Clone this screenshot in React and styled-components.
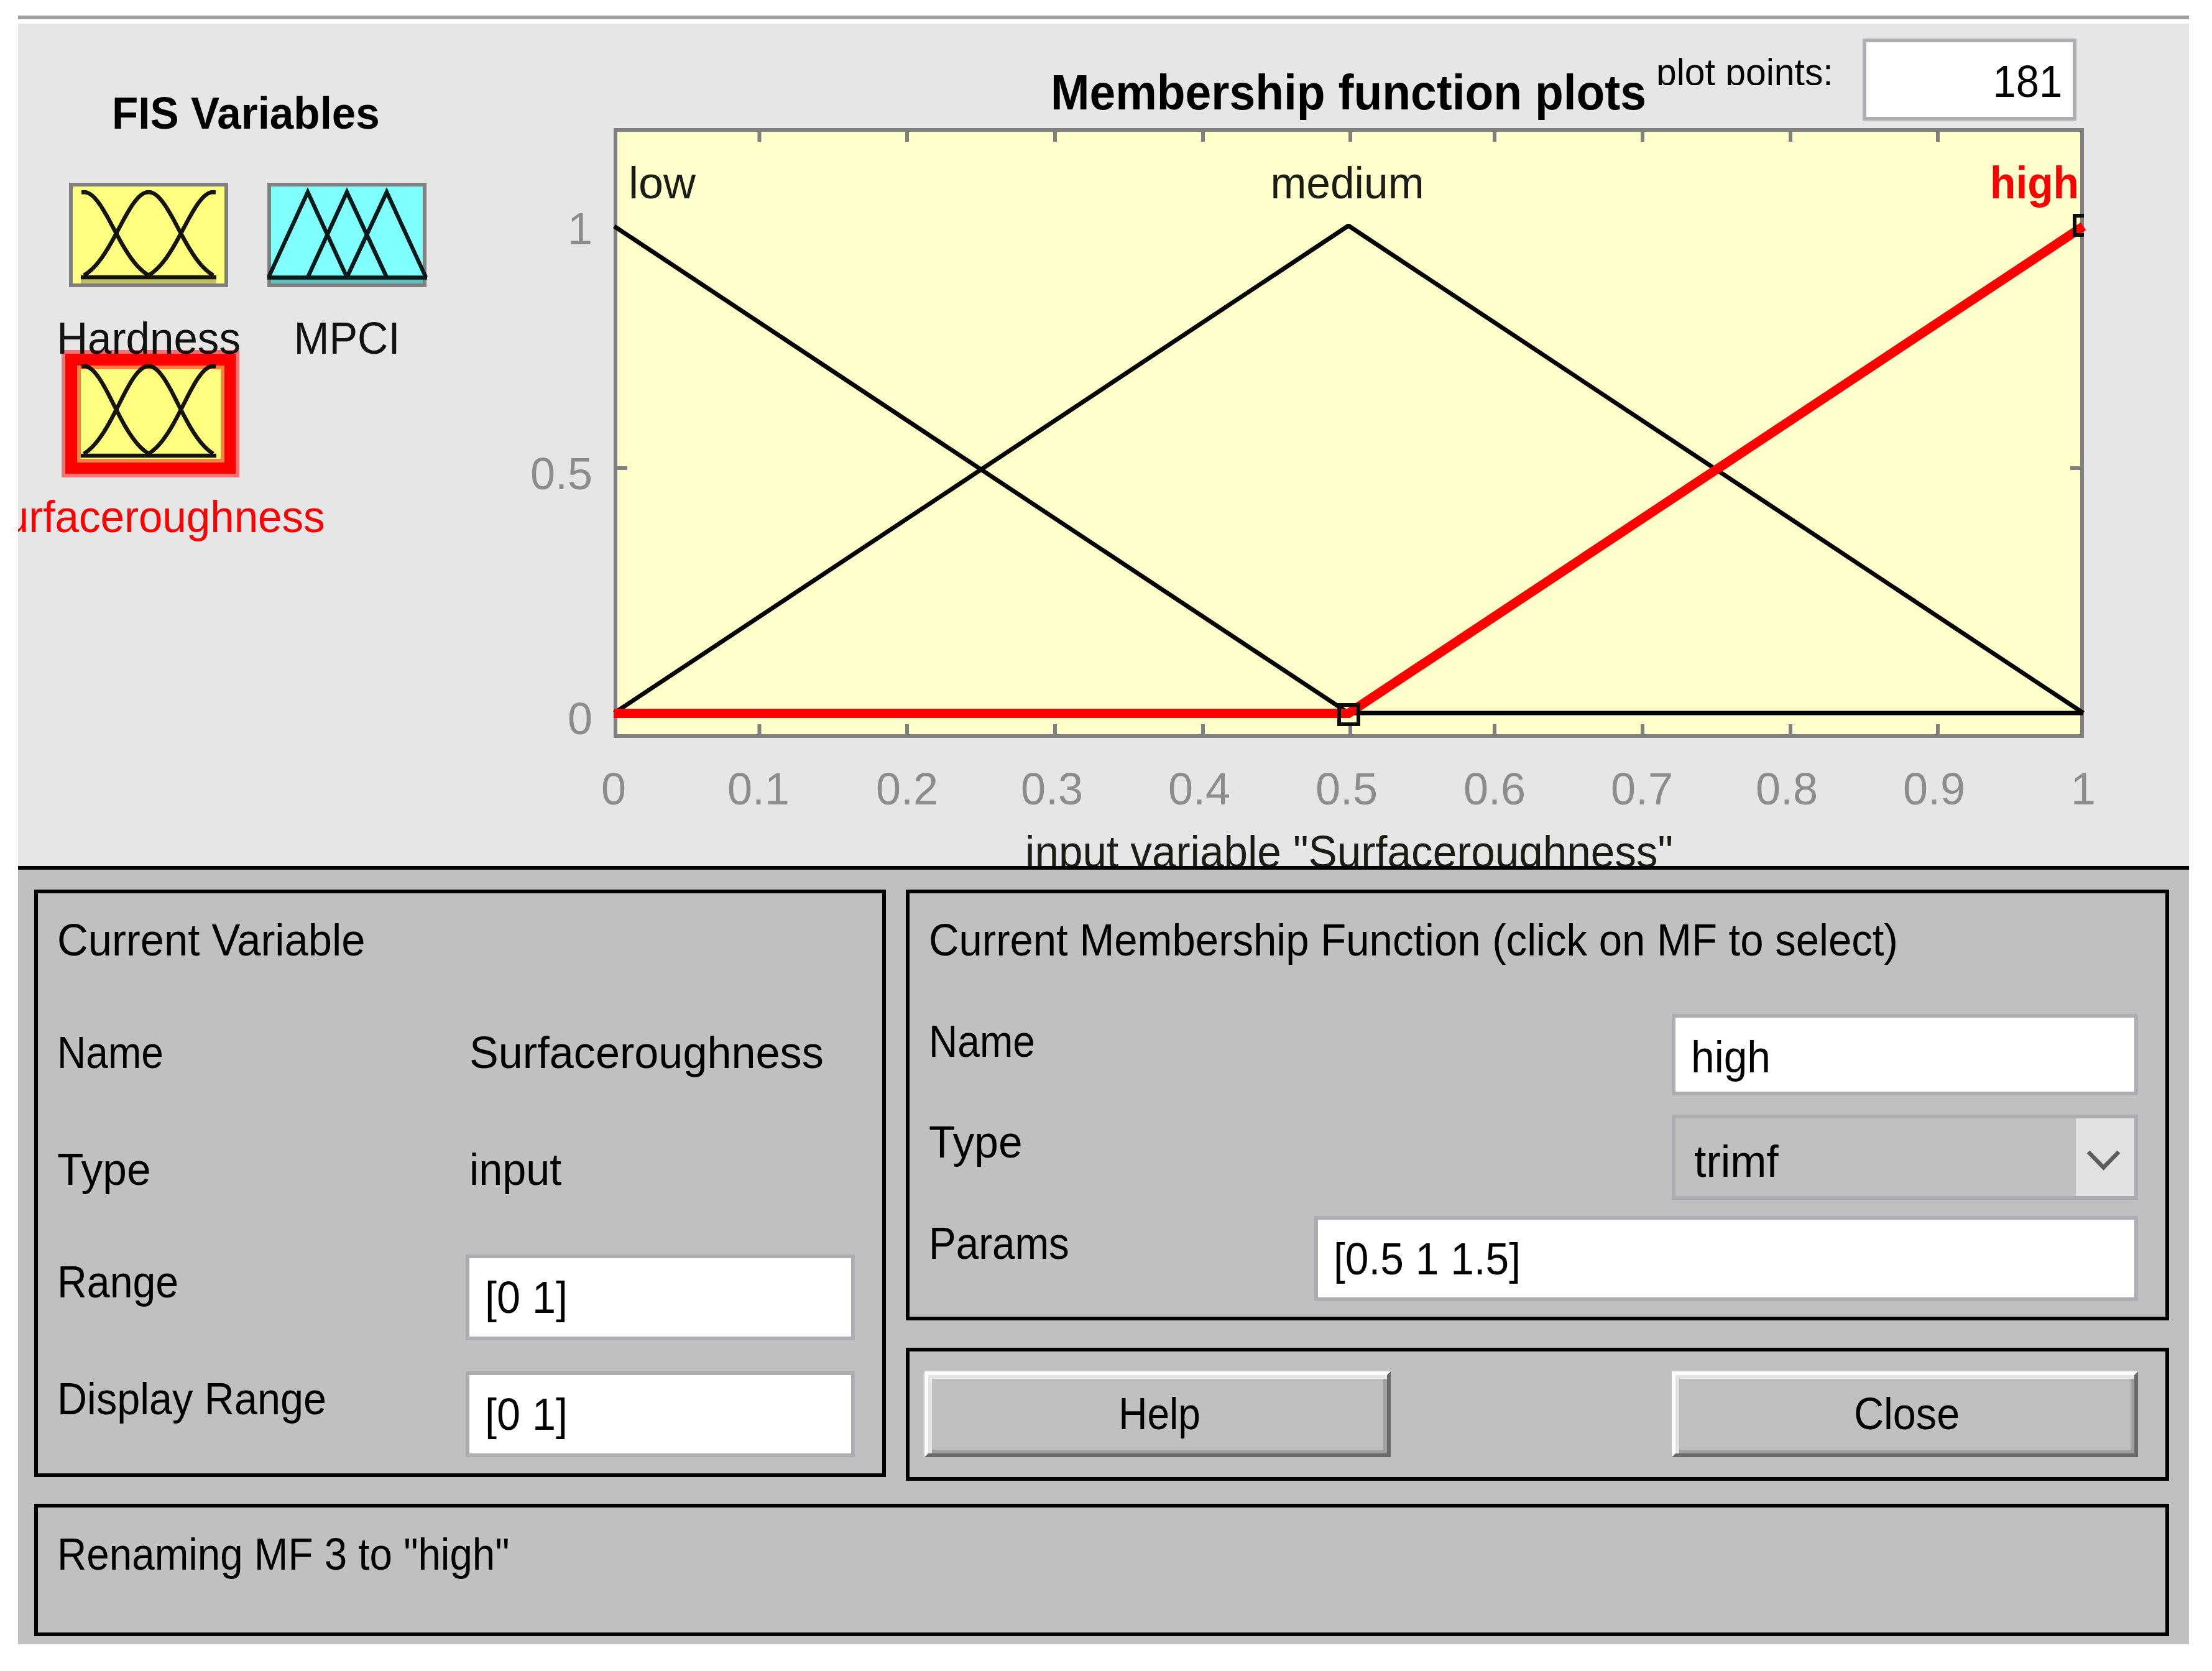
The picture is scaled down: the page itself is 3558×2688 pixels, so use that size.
import styled, { createGlobalStyle } from "styled-components";

const GlobalStyle = createGlobalStyle`
  * {
    box-sizing: border-box;
  }

  body {
    margin: 0;
    background-color: #ffffff;
    font-family: "Liberation Sans", Arial, sans-serif;
    color: #000000;
  }
`;

// Component Styles

const Window = styled.div`
  width: 3492px;
  margin: 25px 0 0 29px;
  border-top: 6px solid #a0a0a0;
  padding-top: 7px;
`;

const Figure = styled.section`
  height: 1355px;
  display: flex;
  background-color: #e6e6e6;
  overflow: hidden;
`;

/* Glyphs are a little condensed, $fit is the horizontal ratio */
const Text = styled.span`
  display: block;
  font-size: ${(props) => props.$size || 72}px;
  line-height: 72px;
  font-weight: ${(props) => (props.$bold ? "bold" : "normal")};
  white-space: nowrap;
  transform: scaleX(${(props) => props.$fit || 1});
  transform-origin: ${(props) => props.$origin || "left"} center;
`;

const VariableList = styled.div`
  width: 791px;
  padding-top: 108px;
`;

const VariableHeading = styled.div`
  padding-left: 151px;
  height: 148px;
`;

const VariableGrid = styled.div`
  display: grid;
  grid-template-columns: 256px 256px;
  grid-template-rows: 269px auto;
  column-gap: 63px;
  padding-left: 82px;
`;

const Variable = styled.div`
  display: flex;
  flex-direction: column;
  align-items: center;
  gap: ${(props) => (props.$selected ? 27 : 46)}px;
  margin-left: ${(props) => (props.$selected ? 6 : 0)}px;
  color: ${(props) => (props.$selected ? "#ff0000" : "#111111")};

  svg {
    display: block;
    overflow: visible;
    flex-shrink: 0;
  }
`;

const VariableName = styled(Text)`
  position: relative;
  z-index: 1;
`;

const PlotArea = styled.div`
  width: 2701px;
`;

const PlotHeader = styled.header`
  height: 168px;
  display: flex;
  align-items: flex-start;
  padding-left: 870px;
`;

const PlotTitle = styled.div`
  width: 974px;
  padding-top: 75px;
`;

const PlotPointsLabel = styled.div`
  width: 332px;
  height: 51px;
  margin-top: 48px;
  overflow: hidden;
`;

const PlotPointsText = styled(Text)`
  line-height: 61px;
`;

const Field = styled.div`
  width: ${(props) => props.$width}px;
  height: ${(props) => props.$height || 138}px;
  flex-shrink: 0;
  padding: ${(props) => props.$top || 27}px 17px 0 25px;
  border: 6px solid #abadb3;
  background-color: #ffffff;
  display: flex;
  justify-content: ${(props) => (props.$alignRight ? "flex-end" : "flex-start")};
`;

const PlotPointsField = styled(Field)`
  margin-top: 24px;
`;

const Controls = styled.section`
  height: 1252px;
  border-top: 6px solid #000000;
  background-color: #c0c0c0;
  padding: 32px 32px 0 26px;
  display: grid;
  grid-template-columns: 1370px 2032px;
  grid-template-rows: 951px 213px;
  column-gap: 32px;
  row-gap: 37px;
`;

const Frame = styled.div`
  border: 6px solid #000000;
  height: ${(props) => props.$height}px;
`;

const FormFrame = styled(Frame)`
  padding: 39px 44px 0 31px;
`;

const RightColumn = styled.div`
  display: flex;
  flex-direction: column;
  gap: 44px;
`;

const FormTitle = styled.div`
  height: ${(props) => props.$height}px;
`;

const Row = styled.div`
  height: ${(props) => props.$height}px;
  display: flex;
  align-items: flex-start;
  justify-content: ${(props) => (props.$spread ? "space-between" : "flex-start")};
`;

const Label = styled.div`
  width: ${(props) => props.$width || 657}px;
  padding-top: 8px;
`;

const Value = styled.div`
  padding: 8px 0 0 6px;
`;

const Select = styled.div`
  width: 750px;
  height: 137px;
  border: 6px solid #abadb3;
  display: flex;
  justify-content: space-between;
`;

const SelectValue = styled.div`
  padding: 33px 0 0 30px;
`;

const SelectArrow = styled.div`
  width: 94px;
  background-color: #e1e1e1;
`;

const ButtonFrame = styled(Frame)`
  display: flex;
  justify-content: space-between;
  padding: 32px 44px 0 24px;
`;

const Button = styled.button`
  width: 750px;
  height: 138px;
  padding: 0 0 3px 7px;
  display: flex;
  align-items: center;
  justify-content: center;
  font-family: inherit;
  color: #000000;
  background-color: #c0c0c0;
  border: 6px solid;
  border-color: #ffffff #696969 #696969 #ffffff;
  box-shadow: inset 6px 6px 0 #e3e3e3, inset -6px -6px 0 #a0a0a0;
`;

const StatusFrame = styled(Frame)`
  grid-column: 1 / 3;
  padding: 39px 31px 0;
`;

const TickText = styled.text`
  font-size: 72px;
  fill: #8c8c8c;
`;

const MfText = styled.text`
  font-size: 72px;
  font-weight: ${(props) => (props.$selected ? "bold" : "normal")};
  fill: ${(props) => (props.$selected ? "#ff0000" : "#1c1c16")};
`;

// Bell that reaches zero exactly one peak spacing away from its centre
const bell = (t) => (Math.exp(-2.4 * t * t) - Math.exp(-2.4)) / (1 - Math.exp(-2.4));

const bellPoints = (peak, first, last, top, base, spacing) => {
  const points = [];
  for (let x = first; x <= last; x += 4) {
    const value = bell((x - peak) / spacing);
    points.push(`${x},${(base - (base - top) * value).toFixed(1)}`);
  }
  return points.join(" ");
};

function BellCurves({ left, top, base }) {
  return (
    <g fill="none" stroke="#14140a" strokeWidth="6.5">
      <polyline points={bellPoints(left, left - 4, left + 104, top, base - 3, 104)} />
      <polyline points={bellPoints(left + 104, left, left + 208, top, base - 3, 104)} />
      <polyline points={bellPoints(left + 208, left + 104, left + 212, top, base - 3, 104)} />
      <path d={`M${left - 5} ${base}H${left + 213}`} />
    </g>
  );
}

function HardnessIcon() {
  return (
    <svg width="256" height="168" viewBox="0 0 256 168">
      <rect x="3" y="3" width="250" height="162" fill="#ffff80" stroke="#808080" strokeWidth="6" />
      <rect x="19" y="155" width="218" height="7" fill="#bfbf60" />
      <BellCurves left={24} top={15} base={152} />
    </svg>
  );
}

function MpciIcon() {
  return (
    <svg width="256" height="168" viewBox="0 0 256 168">
      <rect x="3" y="3" width="250" height="162" fill="#80ffff" stroke="#808080" strokeWidth="6" />
      <rect x="6" y="155" width="244" height="7" fill="#60bfbf" />
      <g fill="none" stroke="#0a1919" strokeWidth="6.5">
        <path d="M2 152L65 15L128 152" />
        <path d="M65 152L128 15L192 152" />
        <path d="M128 152L192 15L255 152" />
        <path d="M0 152.500H257" />
      </g>
    </svg>
  );
}

function SelectedIcon() {
  return (
    <svg width="286" height="205" viewBox="0 0 286 205">
      <rect width="286" height="205" fill="#f27373" />
      <rect x="6" y="6" width="274" height="193" fill="#ff0000" />
      <rect x="25" y="25" width="237" height="156" fill="#ff8040" />
      <rect x="31" y="31" width="225" height="144" fill="#ffff80" />
      <BellCurves left={36} top={26} base={170} />
    </svg>
  );
}

const xTicks = [1221.5, 1459, 1697, 1935, 2172, 2404, 2642, 2880, 3117];

const xLabels = [
  ["0", 987],
  ["0.1", 1220],
  ["0.2", 1459],
  ["0.3", 1692],
  ["0.4", 1929],
  ["0.5", 2166],
  ["0.6", 2404],
  ["0.7", 2641],
  ["0.8", 2874],
  ["0.9", 3111],
  ["1", 3351],
];

const yLabels = [
  ["1", 393],
  ["0.5", 787],
  ["0", 1181],
];

function MembershipPlot() {
  return (
    <svg width="2701" height="1187" viewBox="820 206 2701 1187" display="block">
      <rect x="990" y="209" width="2359" height="975" fill="#ffffcc" stroke="#808080" strokeWidth="6" />
      <g stroke="#808080" strokeWidth="6">
        {xTicks.map((x) => (
          <path key={x} d={`M${x} 212V228M${x} 1181V1165`} />
        ))}
        <path d="M993 753H1009M3346 753H3330" />
      </g>

      <g fill="none" stroke="#000000" strokeWidth="7">
        <path d="M988 364L2169 1147H3351" />
        <path d="M988 1147L2169 363L3351 1147" strokeLinejoin="bevel" />
      </g>
      <path d="M987 1147.500H2169L3351 364" fill="none" stroke="#ff0000" strokeWidth="15" />
      <g fill="none" stroke="#0c0c0a" strokeWidth="6">
        <rect x="2154" y="1134" width="31" height="31" />
        <path d="M3352 347H3337V378H3352" />
      </g>

      <MfText x="1011" y="318.500" textLength="108" lengthAdjust="spacingAndGlyphs">low</MfText>
      <MfText x="2167" y="318.500" textAnchor="middle" textLength="247" lengthAdjust="spacingAndGlyphs">medium</MfText>
      <MfText $selected x="3344" y="318.500" textAnchor="end" textLength="143" lengthAdjust="spacingAndGlyphs">high</MfText>

      {xLabels.map(([label, x]) => (
        <TickText key={label} x={x} y="1293.500" textAnchor="middle">{label}</TickText>
      ))}
      {yLabels.map(([label, y]) => (
        <TickText key={label} x="953" y={y} textAnchor="end">{label}</TickText>
      ))}
      <MfText x="1649" y="1395" textLength="1042" lengthAdjust="spacingAndGlyphs">
        input variable "Surfaceroughness"
      </MfText>
    </svg>
  );
}

/** Membership function editor */
function App() {
  return (
    <>
      <GlobalStyle />
      <Window>
        <Figure>
          <VariableList>
            <VariableHeading>
              <Text $bold $size={73} $fit={0.948}>FIS Variables</Text>
            </VariableHeading>
            <VariableGrid>
              <Variable>
                <HardnessIcon />
                <VariableName $origin="center" $fit={0.96}>Hardness</VariableName>
              </Variable>
              <Variable>
                <MpciIcon />
                <VariableName $origin="center" $fit={0.95}>MPCI</VariableName>
              </Variable>
              <Variable $selected>
                <SelectedIcon />
                <VariableName $origin="center" $fit={0.96}>Surfaceroughness</VariableName>
              </Variable>
            </VariableGrid>
          </VariableList>
          <PlotArea>
            <PlotHeader>
              <PlotTitle>
                <Text $bold $size={79} $fit={0.949}>Membership function plots</Text>
              </PlotTitle>
              <PlotPointsLabel>
                <PlotPointsText $size={61} $fit={0.965}>plot points:</PlotPointsText>
              </PlotPointsLabel>
              <PlotPointsField $width={344} $height={132} $alignRight>
                <Text $origin="right" $fit={0.93}>181</Text>
              </PlotPointsField>
            </PlotHeader>
            <MembershipPlot />
          </PlotArea>
        </Figure>

        <Controls>
          <FormFrame $height={945}>
            <FormTitle $height={173}>
              <Text $fit={0.955}>Current Variable</Text>
            </FormTitle>
            <Row $height={188}>
              <Label><Text $fit={0.89}>Name</Text></Label>
              <Value><Text $fit={0.975}>Surfaceroughness</Text></Value>
            </Row>
            <Row $height={181}>
              <Label><Text $fit={0.965}>Type</Text></Label>
              <Value><Text $fit={0.95}>input</Text></Value>
            </Row>
            <Row $height={188}>
              <Label><Text $fit={0.92}>Range</Text></Label>
              <Field $width={626}><Text $fit={0.95}>[0 1]</Text></Field>
            </Row>
            <Row $height={138}>
              <Label><Text $fit={0.925}>Display Range</Text></Label>
              <Field $width={626}><Text $fit={0.95}>[0 1]</Text></Field>
            </Row>
          </FormFrame>

          <RightColumn>
            <FormFrame $height={693}>
              <FormTitle $height={155}>
                <Text $fit={0.932}>Current Membership Function (click on MF to select)</Text>
              </FormTitle>
              <Row $height={162} $spread>
                <Label><Text $fit={0.89}>Name</Text></Label>
                <Field $width={750} $height={131} $top={27}><Text $fit={0.94}>high</Text></Field>
              </Row>
              <Row $height={163} $spread>
                <Label><Text $fit={0.965}>Type</Text></Label>
                <Select>
                  <SelectValue><Text $fit={0.97}>trimf</Text></SelectValue>
                  <SelectArrow>
                    <svg width="94" height="125" viewBox="0 0 94 125" fill="none">
                      <path d="M20 54L44.500 79L69 54" stroke="#5c5c5c" strokeWidth="6.5" />
                    </svg>
                  </SelectArrow>
                </Select>
              </Row>
              <Row $height={137} $spread>
                <Label $width={500}><Text $fit={0.91}>Params</Text></Label>
                <Field $width={1325} $height={137} $top={27}><Text $fit={0.94}>[0.5 1 1.5]</Text></Field>
              </Row>
            </FormFrame>
            <ButtonFrame $height={214}>
              <Button><Text $origin="center" $fit={0.89}>Help</Text></Button>
              <Button><Text $origin="center" $fit={0.925}>Close</Text></Button>
            </ButtonFrame>
          </RightColumn>

          <StatusFrame $height={213}>
            <Text $fit={0.91}>Renaming MF 3 to "high"</Text>
          </StatusFrame>
        </Controls>
      </Window>
    </>
  );
}

export default App;
